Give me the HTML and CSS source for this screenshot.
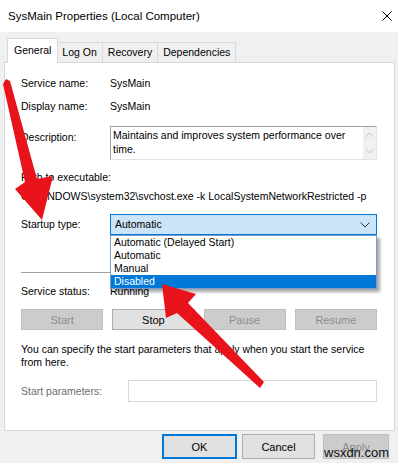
FILE: index.html
```html
<!DOCTYPE html>
<html lang="en">
<head>
  <meta charset="UTF-8" />
  <title>SysMain Properties (Local Computer)</title>
  <link rel="stylesheet" href="styles.css">
</head>
<body>

  <div class="window">
    <div class="titlebar">
      <span class="title">SysMain Properties (Local Computer)</span>
      <svg class="close" width="10" height="10" viewBox="0 0 10 10">
        <path d="M0.5 0.5 L9.5 9.5 M9.5 0.5 L0.5 9.5" stroke="#000" stroke-width="1" fill="none"/>
      </svg>
    </div>

    <div class="tabs">
      <div class="tab active">General</div>
      <div class="tab">Log On</div>
      <div class="tab">Recovery</div>
      <div class="tab">Dependencies</div>
    </div>

    <div class="panel">
      <div class="row first">
        <span class="label">Service name:</span>
        <span>SysMain</span>
      </div>
      <div class="row">
        <span class="label">Display name:</span>
        <span>SysMain</span>
      </div>
      <div class="row desc-row">
        <span class="label">Description:</span>
        <div class="desc">
          <p>Maintains and improves system performance over time.</p>
          <div class="scroll">
            <svg width="9" height="6" viewBox="0 0 9 6"><path d="M0.5 5 L4.5 1 L8.5 5" stroke="#c2c2c2" fill="none"/></svg>
            <svg width="9" height="6" viewBox="0 0 9 6"><path d="M0.5 1 L4.5 5 L8.5 1" stroke="#c2c2c2" fill="none"/></svg>
          </div>
        </div>
      </div>
      <div class="path-label">Path to executable:</div>
      <div class="path">C:\WINDOWS\system32\svchost.exe -k LocalSystemNetworkRestricted -p</div>

      <div class="row startup-row">
        <span class="label">Startup type:</span>
        <div class="combo-wrap">
          <div class="combo">
            <span>Automatic</span>
            <svg width="10" height="6" viewBox="0 0 10 6"><path d="M0.5 0.5 L5 5 L9.5 0.5" stroke="#333" fill="none"/></svg>
          </div>
          <ul class="dropdown">
            <li>Automatic (Delayed Start)</li>
            <li>Automatic</li>
            <li>Manual</li>
            <li class="selected">Disabled</li>
          </ul>
        </div>
      </div>

      <hr class="sep">

      <div class="row status-row">
        <span class="label">Service status:</span>
        <span>Running</span>
      </div>

      <div class="buttons">
        <button class="btn" disabled>Start</button>
        <button class="btn">Stop</button>
        <button class="btn" disabled>Pause</button>
        <button class="btn" disabled>Resume</button>
      </div>

      <p class="note">You can specify the start parameters that apply when you start the service<br>from here.</p>

      <div class="row params-row">
        <span class="label muted">Start parameters:</span>
        <div class="input"></div>
      </div>
    </div>

    <div class="footer">
      <button class="btn ok">OK</button>
      <button class="btn cancel">Cancel</button>
      <button class="btn apply" disabled>Apply</button>
    </div>

    <div class="watermark">wsxdn.com</div>

    <svg class="arrows" width="398" height="463" viewBox="0 0 398 463">
      <polygon points="3,84 6,79 10,81 37,179 53,176 42,220 15,189 25,182" fill="#e8131b"/>
      <polygon points="162,284 196,294 188,303 264,382 260,388 177,313 166,318" fill="#e8131b"/>
    </svg>
  </div>

</body>
</html>
```

FILE: styles.css
```css
body {
  margin: 0;
  font-family: 'Liberation Sans', Arial, sans-serif;
  font-size: 10.5px;
  color: #000;
  background: #f0f0f0;
}
.window {
  position: relative;
  width: 398px;
  height: 463px;
  overflow: hidden;
  background: #f0f0f0;
}
.titlebar {
  height: 32px;
  background: #fff;
  display: flex;
  align-items: center;
  justify-content: space-between;
  padding: 0 6px 0 8px;
  box-sizing: border-box;
}
.title {
  font-size: 11.5px;
}
.tabs {
  display: flex;
  align-items: flex-end;
  height: 30px;
  padding-left: 9px;
}
.tab {
  height: 20px;
  line-height: 19px;
  padding: 0 5px;
  border: 1px solid #d9d9d9;
  border-bottom: none;
  margin-left: -1px;
  box-sizing: border-box;
  background: #f0f0f0;
  font-size: 10.5px;
}
.tab.active {
  height: 25px;
  line-height: 22px;
  margin: 0 -1px -1px -2px;
  padding: 0 6px;
  background: #fff;
  position: relative;
  z-index: 1;
}
.panel {
  margin: 0 3px 0 4px;
  height: 369px;
  box-sizing: border-box;
  border: 1px solid #d9d9d9;
  background: #fff;
  padding: 0 17px 0 16px;
}
.row {
  display: flex;
  align-items: center;
  line-height: 15px;
  margin-top: 8px;
}
.row.first {
  margin-top: 13px;
}
.label {
  width: 89px;
  flex-shrink: 0;
}
.muted {
  color: #6d6d6d;
}
.desc-row {
  align-items: flex-start;
  margin-top: 12px;
}
.desc-row .label {
  padding-top: 4px;
}
.desc {
  flex: 1;
  height: 34px;
  box-sizing: border-box;
  border: 1px solid #a0a0a0;
  border-right-color: #e3e3e3;
  border-bottom-color: #e3e3e3;
  display: flex;
}
.desc p {
  flex: 1;
  margin: 0;
  padding: 1px 14px 1px 2px;
  line-height: 14px;
}
.scroll {
  width: 13px;
  background: #f0f0f0;
  display: flex;
  flex-direction: column;
  justify-content: space-around;
  align-items: center;
}
.path-label {
  margin-top: 10px;
  line-height: 15px;
}
.path {
  margin-top: 4px;
  line-height: 15px;
  white-space: nowrap;
}
.startup-row {
  margin-top: 10px;
}
.combo-wrap {
  flex: 1;
  position: relative;
}
.combo {
  height: 21px;
  box-sizing: border-box;
  border: 1px solid #0078d7;
  background: #cce4f7;
  display: flex;
  align-items: center;
  justify-content: space-between;
  padding: 0 6px 0 4px;
}
.dropdown {
  position: absolute;
  top: 21px;
  left: 0;
  right: 0;
  margin: 0;
  padding: 0;
  list-style: none;
  background: #fff;
  border: 1px solid #7a9cc7;
  box-shadow: 3px 3px 3px rgba(0, 0, 0, 0.35);
  z-index: 2;
}
.dropdown li {
  height: 13px;
  line-height: 13px;
  padding-left: 3px;
}
.dropdown li.selected {
  background: #0078d7;
  color: #fff;
}
.sep {
  margin: 37px 0 0;
  border: none;
  border-top: 1px solid #a0a0a0;
}
.status-row {
  margin-top: 11px;
}
.buttons {
  display: grid;
  grid-template-columns: repeat(4, 1fr);
  gap: 9px;
  margin-top: 10px;
}
.btn {
  height: 21px;
  font-family: inherit;
  font-size: 11px;
  color: #000;
  background: #e1e1e1;
  border: 1px solid #adadad;
  padding: 0;
}
.btn:disabled {
  background: #cccccc;
  border-color: #bfbfbf;
  color: #8d8d8d;
}
.note {
  margin: 13px 0 0;
  line-height: 13px;
  white-space: nowrap;
}
.params-row {
  margin-top: 11px;
}
.input {
  flex: 1;
  height: 22px;
  margin-left: 18px;
  box-sizing: border-box;
  border: 1px solid #d9d9d9;
}
.footer {
  display: flex;
  padding: 3px 0 0 162px;
}
.footer .btn {
  height: 25px;
}
.ok {
  width: 75px;
  border: 2px solid #0078d7;
}
.cancel {
  width: 73px;
  margin-left: 5px;
}
.apply {
  width: 66px;
  margin-left: 8px;
}
.watermark {
  position: absolute;
  left: 324px;
  top: 445px;
  font-size: 13px;
  color: #111;
}
.arrows {
  position: absolute;
  top: 0;
  left: 0;
  pointer-events: none;
  z-index: 5;
}
```
